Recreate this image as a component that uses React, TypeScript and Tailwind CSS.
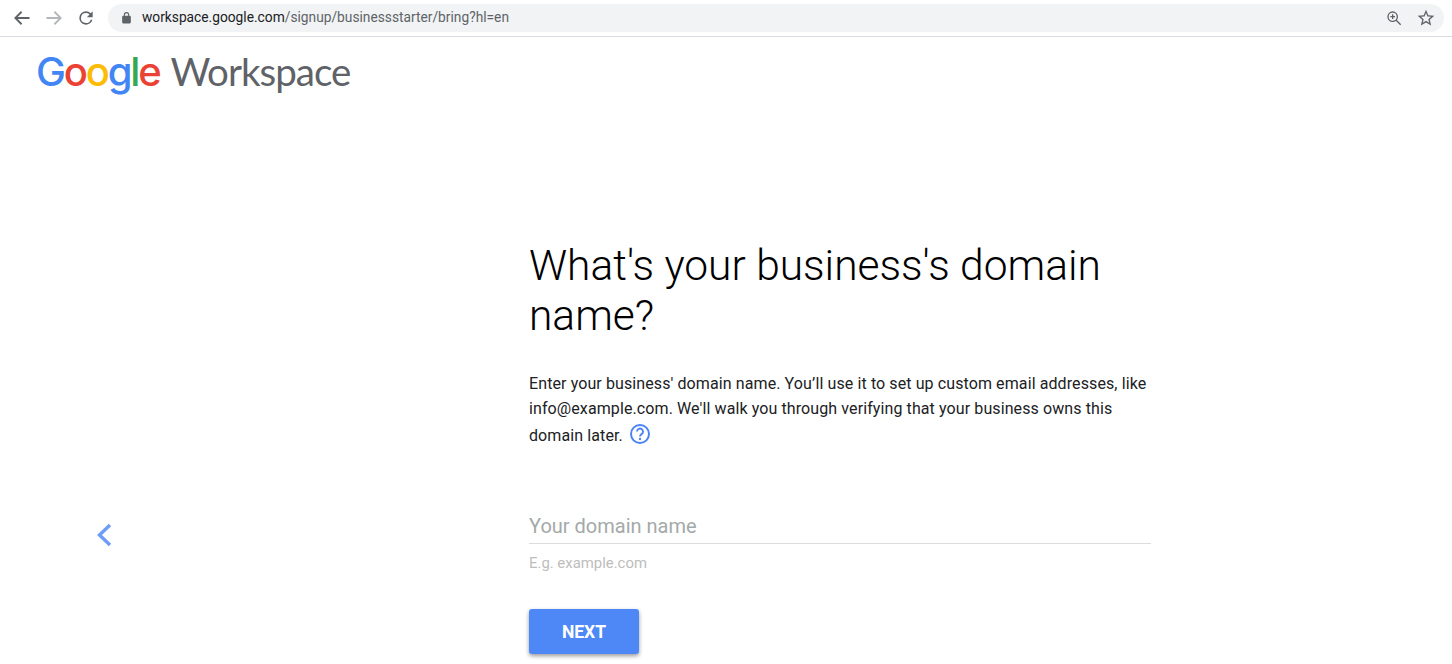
import { FC } from 'react';

const GoogleWord: FC = () => (
  <span className="font-['Inter',sans-serif] font-medium text-[40px] leading-none tracking-[-2.2px]">
    <span className="text-[#4285f4]">G</span>
    <span className="text-[#ea4335]">o</span>
    <span className="text-[#fbbc05]">o</span>
    <span className="text-[#4285f4]">g</span>
    <span className="text-[#34a853]">l</span>
    <span className="text-[#ea4335]">e</span>
  </span>
);

const BrowserBar: FC = () => (
  <div className="h-[37px] flex items-center border-b border-[#dadce0] pl-[12px] pr-[8px] pb-[1px]">
    <svg width="20" height="20" viewBox="0 0 24 24" fill="none" stroke="#5f6368" strokeWidth="2.2">
      <path d="M21 12H4M11.5 4.5 4 12l7.5 7.5" />
    </svg>
    <svg className="ml-[12px]" width="20" height="20" viewBox="0 0 24 24" fill="none" stroke="#b4b6b9" strokeWidth="2.2">
      <path d="M3 12h17M12.5 4.5 20 12l-7.5 7.5" />
    </svg>
    <svg className="ml-[12px]" width="20" height="20" viewBox="0 0 24 24" fill="#5f6368">
      <path d="M17.65 6.35A7.96 7.96 0 0 0 12 4a8 8 0 1 0 7.73 10h-2.08A6 6 0 1 1 12 6c1.66 0 3.14.69 4.22 1.78L13 11h7V4l-2.35 2.35z" />
    </svg>
    <div className="ml-[12px] flex-1 h-[28px] rounded-full bg-[#f1f3f4] flex items-center pl-[12px] pr-[8px]">
      <svg width="13" height="14" viewBox="0 0 24 24" fill="#5f6368">
        <path d="M18 8h-1V6a5 5 0 0 0-10 0v2H6a2 2 0 0 0-2 2v10c0 1.1.9 2 2 2h12a2 2 0 0 0 2-2V10a2 2 0 0 0-2-2zM9 6a3 3 0 0 1 6 0v2H9V6z" />
      </svg>
      <div className="ml-[9px] flex-1 font-['Roboto',sans-serif] text-[13.75px] text-[#5f6368]">
        <span className="text-[#202124]">workspace.google.com</span>/signup/businessstarter/bring?hl=en
      </div>
      <svg width="16" height="16" viewBox="0 0 24 24" fill="none" stroke="#5f6368" strokeWidth="2">
        <circle cx="10" cy="10" r="7" />
        <path d="M15 15l7 7M10 6.5v7M6.5 10h7" />
      </svg>
      <svg className="ml-[14px]" width="20" height="20" viewBox="0 0 24 24" fill="#5f6368">
        <path d="M22 9.24l-7.19-.62L12 2 9.19 8.63 2 9.24l5.46 4.73L5.82 21 12 17.27 18.18 21l-1.63-7.03L22 9.24zM12 15.4l-3.76 2.27 1-4.28-3.32-2.88 4.38-.38L12 6.1l1.71 4.04 4.38.38-3.32 2.88 1 4.28L12 15.4z" />
      </svg>
    </div>
  </div>
);

export default function App() {
  return (
    <div className="h-[664px] overflow-hidden bg-white font-['Roboto',sans-serif]">
      <BrowserBar />

      <header className="pl-[36px] pt-[9px] h-[60px] flex items-center gap-[11px]">
        <GoogleWord />
        <span className="font-['Lato',sans-serif] text-[38.5px] leading-none tracking-[-1px] text-[#5f6368]">Workspace</span>
      </header>

      <main className="flex">
        <div className="w-[529px] pl-[96px] pt-[426px]">
          <svg width="16" height="24" viewBox="0 0 16 24" fill="none" stroke="#6f9cf7" strokeWidth="3.4">
            <path d="M14 2 3.5 12 14 22" />
          </svg>
        </div>

        <div className="w-[622px] pt-[144px]">
          <h1 className="text-[42.5px] leading-[50px] font-light text-black">What's your business's domain name?</h1>

          <p className="mt-[30px] text-[16px] leading-[25px] tracking-[0.1px] text-[#202124]">
            Enter your business' domain name. You’ll use it to set up custom email addresses, like info@example.com. We'll walk you through verifying that your business owns this domain later.
            <svg className="inline-block ml-[7px] mt-[3px] align-[-3px]" width="20" height="20" viewBox="0 0 20 20" fill="none">
              <circle cx="10" cy="10" r="9" stroke="#4d84f4" strokeWidth="2" />
              <path d="M7 7.6a3 3 0 1 1 4.6 2.5c-1 .7-1.6 1.2-1.6 2.4" stroke="#4d84f4" strokeWidth="1.9" />
              <circle cx="10" cy="15" r="1.2" fill="#4d84f4" />
            </svg>
          </p>

          <div className="mt-[63px] h-[33px] border-b border-[#dcdcdc] text-[20px] leading-[30px] text-[#a4a9a9]">Your domain name</div>
          <div className="mt-[9px] text-[14.9px] leading-[20px] text-[#bdbdbd]">E.g. example.com</div>

          <button className="mt-[36px] w-[110px] h-[45px] pt-[1px] rounded-[3px] bg-[#4d88f6] text-white text-[17.5px] font-bold shadow-[0_2px_4px_rgba(0,0,0,0.4)]">NEXT</button>
        </div>
      </main>
    </div>
  );
}
